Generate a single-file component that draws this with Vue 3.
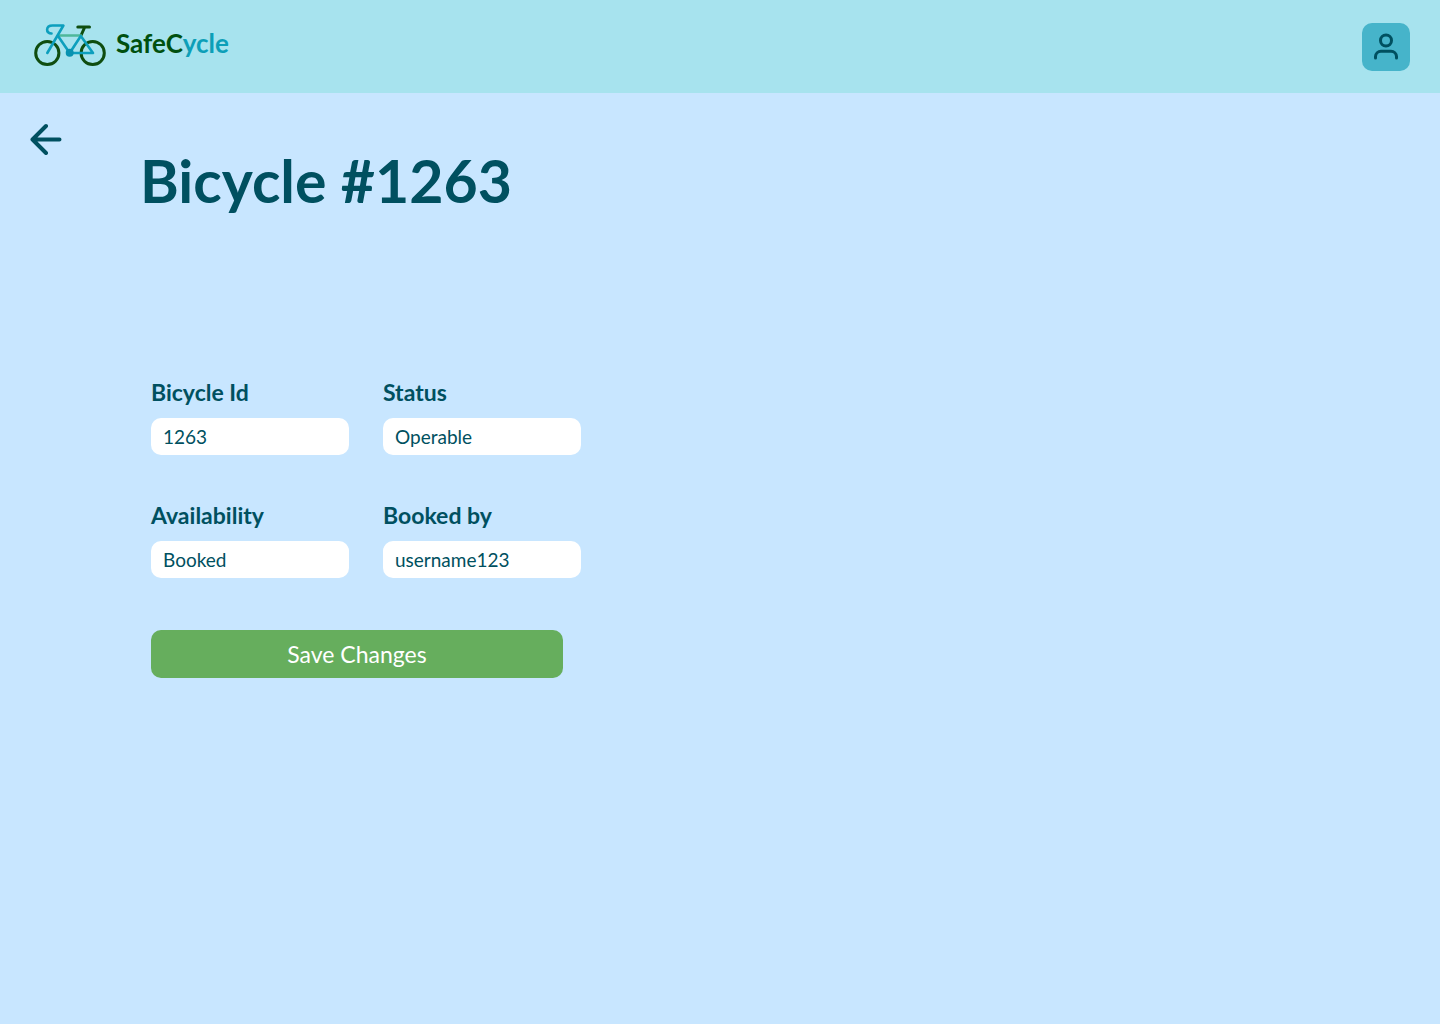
<script setup>
import { reactive } from 'vue'

const bicycle = reactive({
  id: '1263',
  status: 'Operable',
  availability: 'Booked',
  bookedBy: 'username123',
})

const title = `Bicycle #${bicycle.id}`

const fields = [
  { key: 'id', label: 'Bicycle Id' },
  { key: 'status', label: 'Status' },
  { key: 'availability', label: 'Availability' },
  { key: 'bookedBy', label: 'Booked by' },
]
</script>

<template>
  <div class="page">
    <header class="topbar">
      <a class="brand" href="#">
        <svg class="brand-mark" viewBox="32 22 76 46" fill="none" stroke-width="2.6" stroke-linecap="round" stroke-linejoin="round" aria-hidden="true">
          <g stroke="#0f4d0f" stroke-width="3">
            <circle cx="47.3" cy="53" r="11.6" />
            <circle cx="92.7" cy="53" r="11.6" />
            <path d="M77.8 27H89.5M84.8 27L81 35.5" />
          </g>
          <path d="M58 35.5H81" stroke="#4fb89a" />
          <g stroke="#0d9fbd">
            <path d="M47.3 53L63.4 25.5H52.5C45.5 25.5 45.5 33.5 51.5 33.5" />
            <path d="M58 36L69.7 53L80.8 36L93 53H69.7" />
          </g>
          <circle cx="69.7" cy="52.7" r="4" fill="#0892b0" />
        </svg>
        <span class="brand-name">SafeC<span class="brand-accent">ycle</span></span>
      </a>
      <button class="profile" type="button" aria-label="Profile">
        <svg viewBox="0 0 28 32" fill="none" stroke="#005060" stroke-width="3" stroke-linecap="round" aria-hidden="true">
          <circle cx="14" cy="9.5" r="5.5" />
          <path d="M3.5 27V25.5A5.5 5.5 0 0 1 9 20.2H19A5.5 5.5 0 0 1 24.5 25.5V27" />
        </svg>
      </button>
    </header>

    <main class="content">
      <a class="back" href="#" aria-label="Back">
        <svg viewBox="0 0 32 32" fill="none" stroke="#005060" stroke-width="4" stroke-linecap="round" stroke-linejoin="round" aria-hidden="true">
          <path d="M29.5 16.5H2.5M16 3L2.5 16.5L16 30" />
        </svg>
      </a>
      <section class="details">
        <h1 class="title">{{ title }}</h1>
        <form class="form" @submit.prevent>
          <div class="fields">
            <div v-for="field in fields" :key="field.key" class="field">
              <label :for="field.key">{{ field.label }}</label>
              <input :id="field.key" v-model="bicycle[field.key]" type="text" />
            </div>
          </div>
          <button class="save" type="submit">Save Changes</button>
        </form>
      </section>
    </main>
  </div>
</template>

<style>
body {
  margin: 0;
  background: #c8e6ff;
}
</style>

<style scoped>
.page {
  min-height: 100vh;
  background: #c8e6ff;
  color: #005060;
  font-family: Lato, sans-serif;
}

.page * {
  box-sizing: border-box;
}

.topbar {
  display: flex;
  align-items: center;
  justify-content: space-between;
  height: 93px;
  padding: 0 30px 0 32px;
  background: #a7e3ee;
}

.brand {
  display: flex;
  align-items: center;
  gap: 8px;
  padding-bottom: 4px;
  text-decoration: none;
}

.brand-mark {
  width: 76px;
  height: 46px;
}

.brand-name {
  padding-bottom: 4px;
  color: #00500f;
  font-size: 26px;
  font-weight: 700;
  line-height: 32px;
}

.brand-accent {
  color: #0d9fb8;
}

.profile {
  display: grid;
  place-items: center;
  width: 48px;
  height: 48px;
  padding: 0;
  border: 0;
  border-radius: 10px;
  background: #46b4ca;
}

.profile svg {
  width: 28px;
  height: 32px;
}

.content {
  display: flex;
  gap: 78px;
  padding: 30px;
}

.back {
  flex: none;
  width: 32px;
  height: 32px;
}

.back svg {
  display: block;
}

.details {
  flex: 1;
}

.title {
  margin: 18px 0 0;
  font-size: 59px;
  font-weight: 700;
  line-height: 80px;
}

.form {
  padding: 156px 0 0 11px;
}

.fields {
  display: grid;
  grid-template-columns: repeat(2, 198px);
  gap: 45px 34px;
}

.field {
  display: flex;
  flex-direction: column;
}

.field label {
  padding-bottom: 11px;
  font-size: 23px;
  font-weight: 700;
  line-height: 30px;
}

.field input {
  width: 100%;
  height: 37px;
  padding: 0 12px;
  border: 0;
  border-radius: 10px;
  background: #fff;
  color: inherit;
  font-family: inherit;
  font-size: 19px;
}

.save {
  display: block;
  width: 412px;
  height: 48px;
  margin-top: 52px;
  padding: 0;
  border: 0;
  border-radius: 10px;
  background: #66ae5d;
  color: #fff;
  font-family: inherit;
  font-size: 23px;
}
</style>
